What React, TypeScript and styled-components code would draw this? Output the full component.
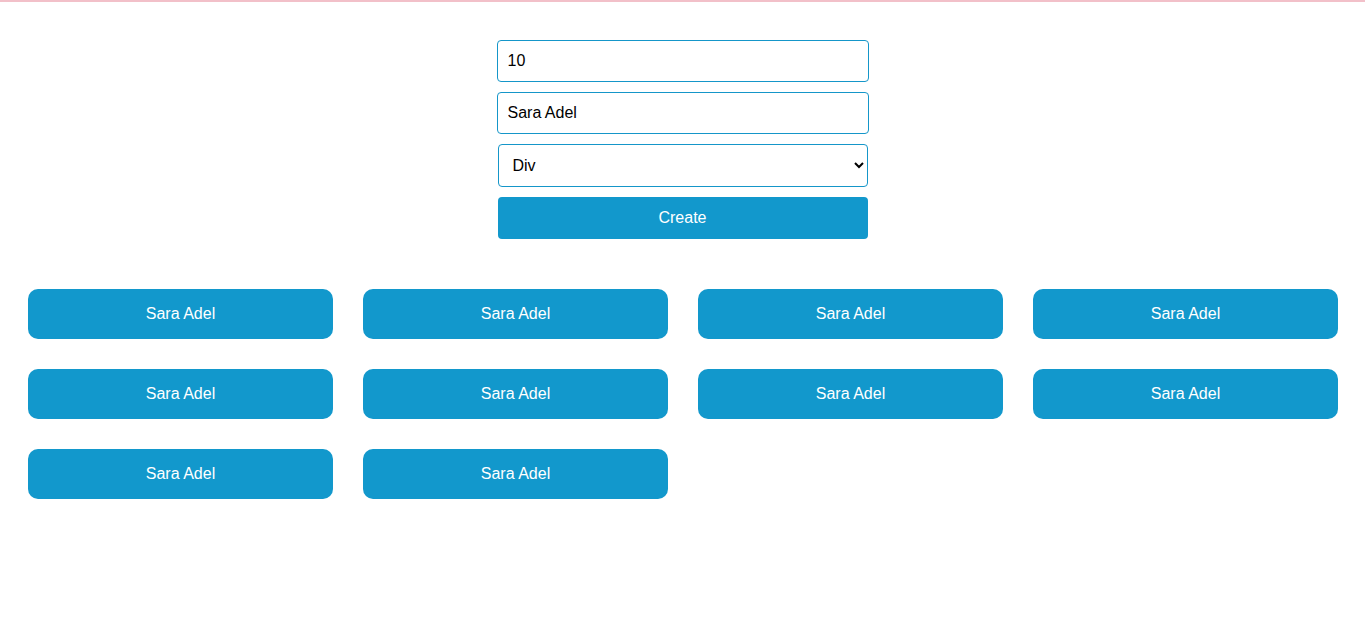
import React from "react";
import styled, { createGlobalStyle } from "styled-components";

const Global = createGlobalStyle`
  html, body { margin: 0; padding: 0; background: #fff; }
  body { font-family: "Liberation Sans", Arial, sans-serif; }
`;

const TopLine = styled.div`
  height: 2px;
  background: #f2c0c9;
`;

const Form = styled.div`
  width: 372px;
  margin: 38px auto 0;
  display: flex;
  flex-direction: column;
  gap: 10px;
`;

const Input = styled.input`
  box-sizing: border-box;
  width: 372px;
  height: 42px;
  border: 1px solid #1596c9;
  border-radius: 4px;
  padding: 0 10px;
  font-family: "Liberation Sans", Arial, sans-serif;
  font-size: 16px;
  color: #000;
  outline: none;
`;

const Select = styled.select`
  box-sizing: border-box;
  width: 370px;
  height: 43px;
  margin-left: 1px;
  border: 1px solid #1596c9;
  border-radius: 4px;
  padding: 0 10px;
  font-family: "Liberation Sans", Arial, sans-serif;
  font-size: 16px;
  color: #000;
  background: #fff;
  outline: none;
`;

const CreateButton = styled.button`
  box-sizing: border-box;
  width: 370px;
  height: 42px;
  margin-left: 1px;
  border: none;
  border-radius: 4px;
  background: #1298cc;
  color: #fff;
  font-family: "Liberation Sans", Arial, sans-serif;
  font-size: 16px;
`;

const Grid = styled.div`
  display: grid;
  grid-template-columns: repeat(4, 305px);
  gap: 30px;
  padding: 50px 28px 0;
`;

const Box = styled.div`
  height: 50px;
  border-radius: 10px;
  background: #1298cc;
  color: #fff;
  font-size: 16px;
  display: flex;
  align-items: center;
  justify-content: center;
`;

export default function App() {
  const items = Array.from({ length: 10 }, () => "Sara Adel");
  return (
    <>
      <Global />
      <TopLine />
      <Form>
        <Input defaultValue="10" />
        <Input defaultValue="Sara Adel" />
        <Select defaultValue="Div">
          <option value="Div">Div</option>
          <option value="Section">Section</option>
          <option value="Span">Span</option>
        </Select>
        <CreateButton>Create</CreateButton>
      </Form>
      <Grid>
        {items.map((t, i) => (
          <Box key={i}>{t}</Box>
        ))}
      </Grid>
    </>
  );
}
